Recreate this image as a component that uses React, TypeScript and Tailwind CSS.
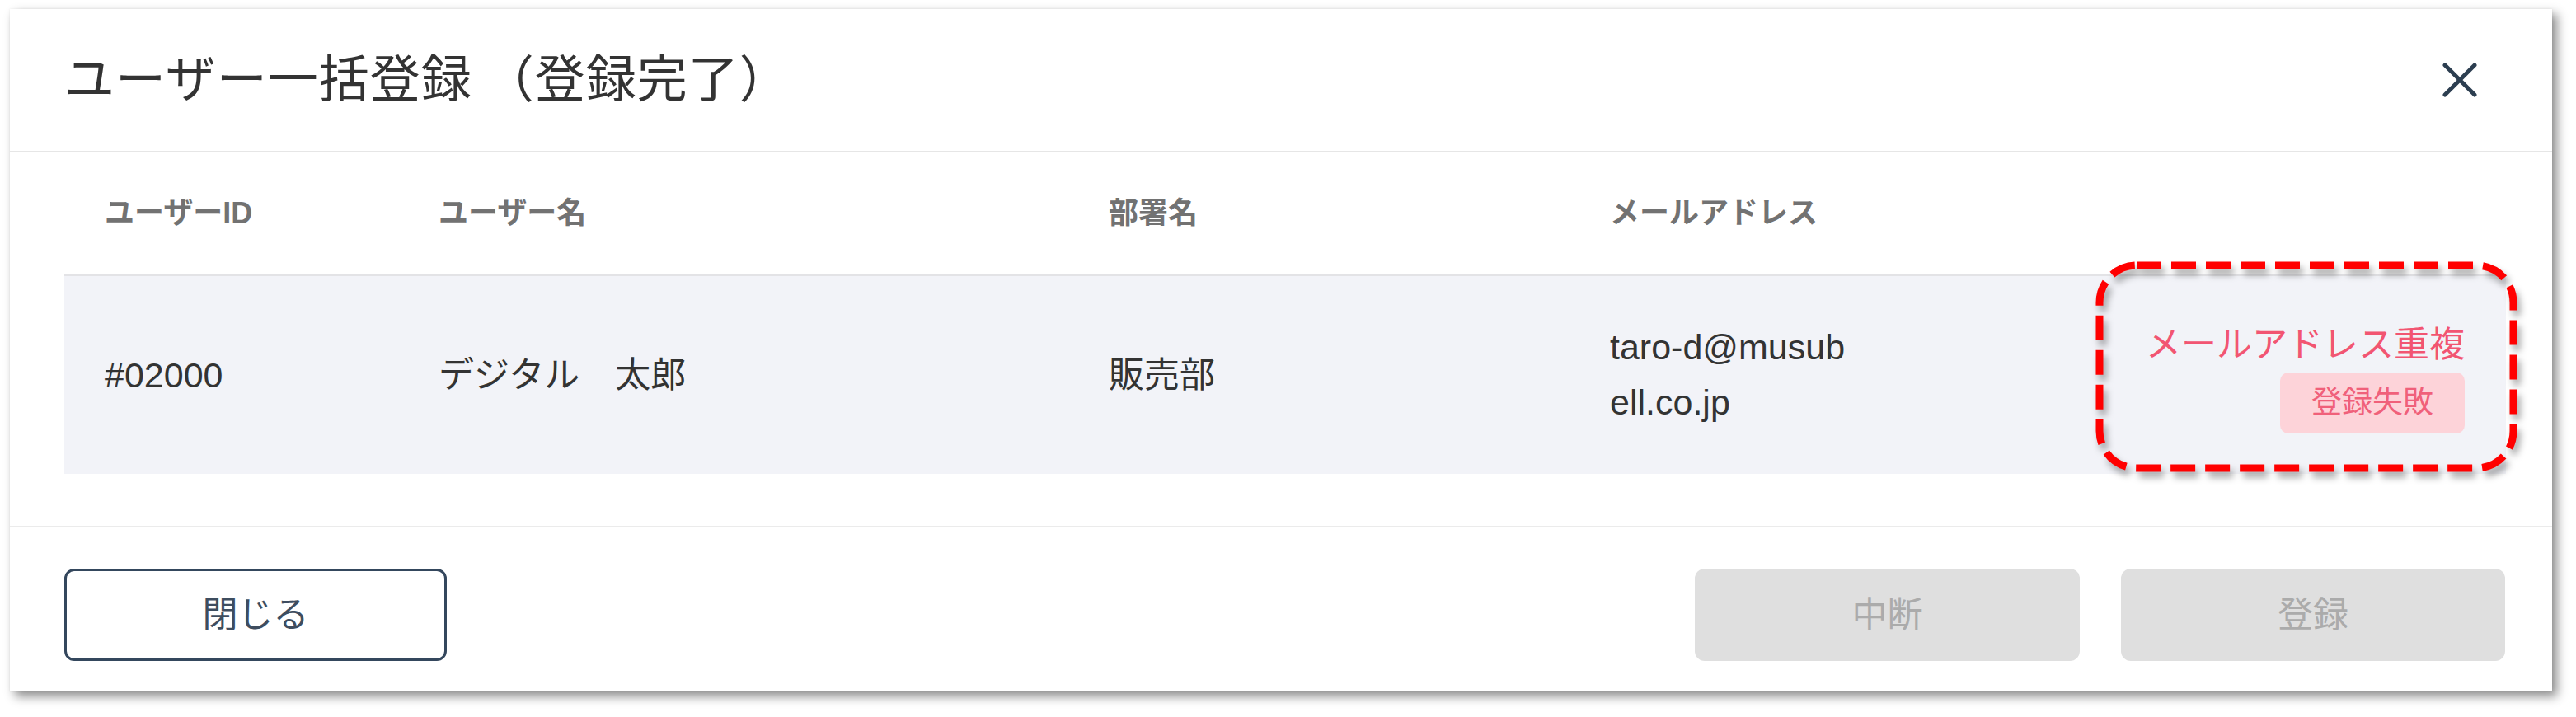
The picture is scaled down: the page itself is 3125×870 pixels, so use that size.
const font = "font-['Liberation_Sans','Noto_Sans_CJK_JP',sans-serif]";
const cols = "grid grid-cols-[405px_813px_608px_296px_1fr] pl-[49px] pr-[50px]";

function CloseIcon() {
  return (
    <svg width="42" height="42" viewBox="0 0 42 42" fill="none">
      <path d="M3 3L39 39M39 3L3 39" stroke="#2c3e50" strokeWidth="5" strokeLinecap="round" />
    </svg>
  );
}

export default function App() {
  return (
    <div className={`relative w-[3125px] h-[870px] bg-white pt-[11px] pl-[12px] ${font}`}>
      <div className="flex w-[3084px] h-[828px] flex-col bg-white shadow-[0_0_2px_rgba(0,0,0,0.08),6px_6px_12px_rgba(0,0,0,0.45)]">
        {/* header */}
        <div className="flex h-[174px] items-center justify-between border-b-2 border-[#e6e6e6] pl-[66px] pr-[91px]">
          <h1 className="text-[61px] leading-none tracking-[1px] text-[#333]">
            ユーザー一括登録<span className="ml-[14px]">（登録完了）</span>
          </h1>
          <CloseIcon />
        </div>

        {/* table */}
        <div className="pl-[66px] pr-[56px] pb-[63px]">
          <div className={`${cols} h-[148px] items-center text-[36px] font-semibold text-[#727272]`}>
            <div>ユーザーID</div>
            <div>ユーザー名</div>
            <div>部署名</div>
            <div>メールアドレス</div>
            <div />
          </div>
          <div className={`${cols} h-[242px] items-center border-t-2 border-[#e3e3e6] bg-[#f2f3f8] text-[43px] text-[#333]`}>
            <div>#02000</div>
            <div>デジタル　太郎</div>
            <div>販売部</div>
            <div className="break-all leading-[67px]">taro-d@musubell.co.jp</div>
            <div className="flex flex-col items-end pt-[8px]">
              <div className="text-[43px] leading-[52px] text-[#f25572]">メールアドレス重複</div>
              <span className="mt-[8px] flex h-[74px] items-center rounded-[10px] bg-[#fdd3d9] px-[38px] text-[37px] text-[#f0607a]">
                登録失敗
              </span>
            </div>
          </div>
        </div>

        {/* footer */}
        <div className="flex items-start justify-between border-t-2 border-[#ebebeb] pt-[50px] pl-[66px] pr-[57px]">
          <button className="flex h-[112px] w-[464px] items-center justify-center rounded-[12px] border-[3px] border-[#34475d] text-[43px] text-[#3e4d5f]">
            閉じる
          </button>
          <div className="flex gap-[50px]">
            <button className="flex h-[112px] w-[467px] items-center justify-center rounded-[12px] bg-[#dfdfdf] text-[43px] text-[#ababab]">
              中断
            </button>
            <button className="flex h-[112px] w-[466px] items-center justify-center rounded-[12px] bg-[#dfdfdf] text-[43px] text-[#ababab]">
              登録
            </button>
          </div>
        </div>
      </div>

      {/* annotation */}
      <svg
        className="absolute left-[2530px] top-[305px] drop-shadow-[4px_7px_4px_rgba(0,0,0,0.35)]"
        width="540"
        height="290"
        viewBox="0 0 540 290"
      >
        <rect
          x="17"
          y="17"
          width="502"
          height="246"
          rx="45"
          fill="none"
          stroke="#ff0000"
          strokeWidth="9"
          strokeDasharray="30 12"
        />
      </svg>
    </div>
  );
}
